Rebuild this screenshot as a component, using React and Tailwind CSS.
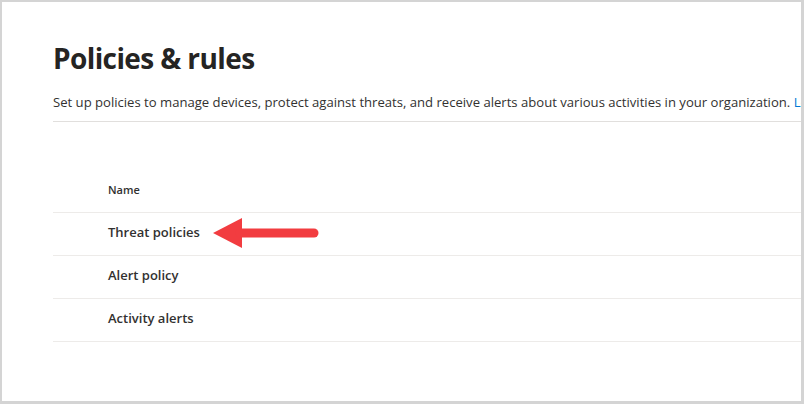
export default function App() {
  const rows = ["Threat policies", "Alert policy", "Activity alerts"];
  return (
    <div className="w-[804px] h-[404px] bg-[#d4d4d4] pt-[2px] pl-[2px] pr-[3px] pb-[3px]" style={{ fontFamily: '"Open Sans", "Noto Sans", sans-serif' }}>
      <div className="w-full h-full bg-white overflow-hidden pl-[51px] pt-[38px]">
        <h1 className="text-[28px] leading-[36px] font-bold tracking-[-0.6px] text-[#252423] whitespace-nowrap">Policies &amp; rules</h1>
        <p className="mt-[16px] text-[13.1px] leading-[20px] text-[#323130] whitespace-nowrap">
          Set up policies to manage devices, protect against threats, and receive alerts about various activities in your organization. <span className="text-[#0078d4]">Learn more</span>
        </p>
        <div className="mt-[9px] h-px bg-[#e1dfdd] w-[760px]" />
        <div className="mt-[48px] w-[760px]">
          <div className="h-[43px] flex items-center pl-[55px] pb-[1px] border-b border-[#edebe9] text-[11px] font-semibold text-[#323130]">Name</div>
          {rows.map((r, i) => (
            <div key={r} className="h-[43px] flex items-center pl-[55px] pb-[2px] border-b border-[#edebe9] text-[13px] font-semibold text-[#323130]">
              <span>{r}</span>
              {i === 0 && (
                <svg width="108" height="32" viewBox="0 0 108 32" className="ml-[13px]">
                  <polygon points="0,16 29,1 29,31" fill="#f23c40" />
                  <line x1="27" y1="16" x2="101" y2="16" stroke="#f23c40" strokeWidth="9" strokeLinecap="round" />
                </svg>
              )}
            </div>
          ))}
        </div>
      </div>
    </div>
  );
}
